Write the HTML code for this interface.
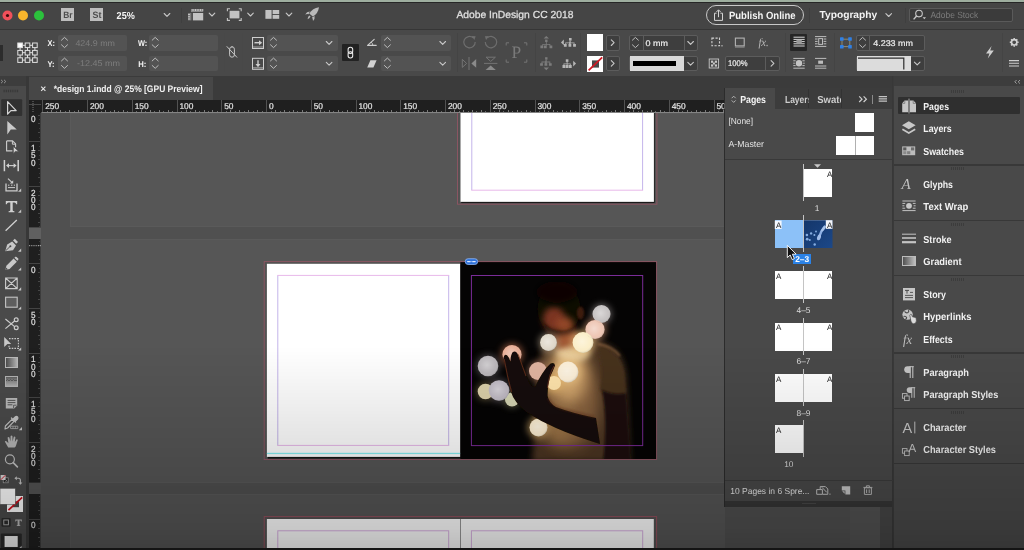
<!DOCTYPE html>
<html lang="en">
<head>
<meta charset="utf-8">
<title>Adobe InDesign CC 2018</title>
<style>
*{box-sizing:border-box;margin:0;padding:0}
html,body{width:1024px;height:550px;overflow:hidden;background:#3a3a3a}
body{font-family:"Liberation Sans",sans-serif;color:#e6e6e6;font-size:10px;position:relative}
.a{position:absolute}
.t{position:absolute;white-space:nowrap;line-height:1}
.b{font-weight:bold}
#app{position:absolute;left:0;top:0;width:1024px;height:550px;overflow:hidden;background:#3a3a3a}
/* top */
#topstrip{left:0;top:0;width:1024px;height:1.5px;background:#9eae9f}
#topline{left:0;top:1.5px;width:1024px;height:1.5px;background:#262626}
#titlebar{left:0;top:3px;width:1024px;height:26px;background:#454545}
#titlesep{left:0;top:28.6px;width:1024px;height:1.6px;background:#363636}
#ctrlbar{left:0;top:30px;width:1024px;height:45.6px;background:#494949}
#tabbar{left:0;top:75.6px;width:1024px;height:25px;background:#3b3b3b}
.fld{position:absolute;background:#535353;border-radius:2px}
.fldb{position:absolute;background:#3e3e3e;border:1px solid #5c5c5c;border-radius:2px}
/* canvas */
#doctabbg{left:29px;top:77px;width:184px;height:23.4px;background:#474747}
#toolsedge{left:26.2px;top:76px;width:2.8px;height:474px;background:#383838}
#canvas{left:41px;top:113px;width:852px;height:437px;background:#505050;overflow:hidden}
.pb{box-shadow:inset 0 0 0 1px #5a5a5a}
.pb{position:absolute;background:#565656}
/* rulers */
#hruler{left:29px;top:100px;width:864px;height:13px;background:#1f1f1f}
#vruler{left:29px;top:113px;width:12px;height:437px;background:#1f1f1f}
.rl{position:absolute;font-size:8.3px;color:#e6e6e6;line-height:1;text-shadow:0 0 .4px #e6e6e6}
.vl{position:absolute;font-size:8.3px;color:#e6e6e6;line-height:1;left:30.8px;text-shadow:0 0 .4px #e6e6e6}
/* toolbar */
#tools{left:0;top:77px;width:28px;height:473px;background:#4a4a4a}
#toolshead{left:0;top:76px;width:28px;height:9.5px;background:#3d3d3d}
/* pages panel */
#pp{left:725px;top:88px;width:167px;height:413px;background:#494949}
#pptabs{left:725px;top:88px;width:167px;height:20.6px;background:#3c3c3c}
#pptab{left:725px;top:88px;width:50.4px;height:20.6px;background:#494949}
.pg{position:absolute;background:#fff}
.pl{position:absolute;font-size:8.3px;color:#dcdcdc;line-height:1;text-align:center}
.pa{position:absolute;font-size:7.5px;color:#222;line-height:1}
/* dock */
#dock{left:893.5px;top:85.8px;width:131px;height:465px;background:#494949}
#docktop{left:893.5px;top:76px;width:131px;height:10px;background:#3d3d3d}
.di{position:absolute;left:923px;font-size:10px;font-weight:bold;color:#f2f2f2;line-height:1;white-space:nowrap;letter-spacing:.1px}
.ds{position:absolute;left:893.5px;width:131px;height:1.2px;background:#383838}
.dg{position:absolute;left:951px;width:14px;height:3px;background:repeating-linear-gradient(90deg,#3c3c3c 0 1px,transparent 1px 2px)}
#txt{will-change:transform}
#vig{left:0;top:0;width:1024px;height:550px;background:linear-gradient(to bottom,rgba(0,0,0,0) 63%,rgba(0,0,0,.105) 80%,rgba(0,0,0,.215) 96%,rgba(0,0,0,.27) 100%);pointer-events:none}
#botline{left:0;top:548px;width:1024px;height:2px;background:#141414}
</style>
</head>
<body>
<div id="app">
<div class="a" id="titlebar"></div>
<div class="a" id="titlesep"></div>
<div class="a" id="ctrlbar"></div>
<div class="a" id="tabbar"></div>
<div class="a" id="topstrip"></div>
<div class="a" id="topline"></div>
<div class="a" id="canvas">
<div class="pb" style="left:29px;top:0;width:684px;height:114.4px"></div>
<div class="pb" style="left:29px;top:126px;width:684px;height:243.6px"></div>
<div class="pb" style="left:29px;top:381px;width:684px;height:60px"></div>
<div class="a" style="left:684px;top:381px;width:125px;height:60px;background:#4f4f4f"></div>
<div class="a" style="left:809px;top:381px;width:30px;height:60px;background:#525252"></div>
<div class="a" style="left:839px;top:381px;width:13px;height:60px;background:#464646"></div>
<svg class="a" style="left:0;top:0" width="852" height="437" viewBox="41 113 852 437">
<defs>
<filter id="bl1" x="-50%" y="-50%" width="200%" height="200%"><feGaussianBlur stdDeviation="1.2"/></filter>
<filter id="bl2" x="-50%" y="-50%" width="200%" height="200%"><feGaussianBlur stdDeviation="3"/></filter>
<filter id="bl3" x="-50%" y="-50%" width="200%" height="200%"><feGaussianBlur stdDeviation="7"/></filter>
<filter id="bl0" x="-50%" y="-50%" width="200%" height="200%"><feGaussianBlur stdDeviation="0.6"/></filter>
<clipPath id="phc"><rect x="460.4" y="262" width="195.8" height="197.2"/></clipPath>
</defs>
<!-- spread 1 -->
<rect x="458" y="90" width="198.6" height="114" fill="#525252"/>
<rect x="461.2" y="90" width="193.5" height="113.1" fill="#1a1a1a"/>
<rect x="460.5" y="90" width="193.4" height="111.85" fill="#fff"/>
<rect x="457.5" y="90" width="199.4" height="114.2" fill="none" stroke="#8a5562" stroke-width="1"/>
<path d="M471.8 113V190.2" fill="none" stroke="#c4b4ea" stroke-width="1"/><path d="M642.6 113V190.2" fill="none" stroke="#c4b4ea" stroke-width="1"/>
<path d="M471.3 190.2H643.1" fill="none" stroke="#e8b8ea" stroke-width="1"/>
<!-- spread 2 -->
<rect x="264.2" y="261.6" width="392.4" height="197.9" fill="#525252"/>
<rect x="267.8" y="264.6" width="387" height="194" fill="#141414"/>
<rect x="266.9" y="263.8" width="193.5" height="193.1" fill="#fff"/>
<path d="M277.8 275.4V445.4M448.7 275.4V445.4" fill="none" stroke="#c4b4ea" stroke-width="1"/>
<path d="M277.3 275.4H449.2M277.3 445.4H449.2" fill="none" stroke="#e8b8ea" stroke-width="1"/>
<rect x="266.9" y="452.8" width="193.5" height="1.3" fill="#88eef2"/>
<g clip-path="url(#phc)">
<rect x="460" y="261" width="197" height="199" fill="#050404"/>
<!-- shirt -->
<path d="M547 338L577 333Q602 340 613 348Q624 356 626 378L630 462L532 462L537 400Q536 360 547 338Z" fill="#4c3624" filter="url(#bl2)"/>
<ellipse cx="570" cy="402" rx="29" ry="46" fill="#86603c" filter="url(#bl3)"/>
<ellipse cx="568" cy="374" rx="19" ry="30" fill="#d0a46c" filter="url(#bl3)"/>
<ellipse cx="573" cy="352" rx="17" ry="10" fill="#ecd2a0" filter="url(#bl2)" opacity=".9"/>
<ellipse cx="558" cy="425" rx="14" ry="20" fill="#a07848" filter="url(#bl3)" opacity=".8"/>
<!-- sleeve + arm -->
<path d="M597 345Q619 350 624 372L626 394Q612 398 600 390Q605 366 597 345Z" fill="#46301f" filter="url(#bl1)"/>
<path d="M598 344Q612 346 620 356" stroke="#8a6240" stroke-width="2" fill="none" filter="url(#bl1)" opacity=".8"/>
<path d="M602 390Q614 396 626 393L631 462L603 462Q608 420 602 390Z" fill="#1c110b" filter="url(#bl1)"/>
<!-- head -->
<ellipse cx="559" cy="309" rx="21.5" ry="26" fill="#100806" filter="url(#bl1)"/>
<ellipse cx="580.5" cy="313" rx="3.6" ry="6.5" fill="#3c1c10" filter="url(#bl1)"/>
<ellipse cx="554" cy="319" rx="11" ry="12" fill="#7c3620" filter="url(#bl2)"/>
<ellipse cx="565" cy="325" rx="9" ry="8" fill="#9c4c2c" filter="url(#bl2)" opacity=".9"/>
<path d="M543 322Q546 338 558 341Q571 339 577 325Q569 333 557 331Q548 329 543 322Z" fill="#2a120a" filter="url(#bl1)" opacity=".9"/>
<path d="M553 336L577 331L581 345L557 349Z" fill="#a05632" filter="url(#bl2)"/>
<ellipse cx="557" cy="292" rx="21" ry="11" fill="#070404" filter="url(#bl2)"/>
<!-- glows -->
<g filter="url(#bl2)" opacity=".6">
<circle cx="601.5" cy="314" r="10.5" fill="#8a8484"/>
<circle cx="595" cy="329.5" r="11.5" fill="#c08868"/>
<circle cx="583" cy="342.5" r="12.5" fill="#e0b878"/>
<circle cx="548.5" cy="342.5" r="10" fill="#b0a088"/>
<circle cx="568" cy="372" r="13" fill="#f0c888"/>
<circle cx="538" cy="371" r="10.5" fill="#b07860"/>
<circle cx="512" cy="354.5" r="11.5" fill="#b06848"/>
<circle cx="488" cy="366" r="12" fill="#605c60"/>
<circle cx="499" cy="390.5" r="12" fill="#686068"/>
<circle cx="485.5" cy="391.5" r="9.5" fill="#7a6c48"/>
<circle cx="512" cy="399.5" r="8.5" fill="#7a7a58"/>
<circle cx="538.5" cy="427.5" r="11.5" fill="#d0a868"/>
<circle cx="553.5" cy="383" r="10" fill="#f0c070"/>
</g>
<!-- balls -->
<defs>
<radialGradient id="bg1" cx=".45" cy=".45" r=".6"><stop offset="0" stop-color="#fff" stop-opacity=".35"/><stop offset=".7" stop-color="#fff" stop-opacity="0"/><stop offset="1" stop-color="#000" stop-opacity=".22"/></radialGradient>
</defs>
<g filter="url(#bl0)">
<circle cx="485.5" cy="391.5" r="7.8" fill="#dcd0aa"/>
<circle cx="512" cy="399.5" r="7" fill="#d4d4b2"/>
<circle cx="601.5" cy="314" r="9" fill="#c6c2c2"/>
<circle cx="595" cy="329.5" r="9.6" fill="#eec6b4"/>
<circle cx="583" cy="342.5" r="10.4" fill="#fbeec8"/>
<circle cx="548.5" cy="342.5" r="8.4" fill="#e0d8ca"/>
<circle cx="568" cy="372" r="10.4" fill="#fdf0d8"/>
<circle cx="538" cy="371" r="9" fill="#e0b4a0"/>
<circle cx="512" cy="354.5" r="9.6" fill="#e8ae96"/>
<circle cx="488" cy="366" r="10.3" fill="#bcb8bc"/>
<circle cx="499" cy="390.5" r="10.3" fill="#c0bac4"/>
<circle cx="538.5" cy="427.5" r="9" fill="#fbecce"/>
<circle cx="554" cy="383" r="7" fill="#ffe4ac"/>
</g>
<g fill="url(#bg1)">
<circle cx="601.5" cy="314" r="9"/><circle cx="595" cy="329.5" r="9.6"/><circle cx="583" cy="342.5" r="10.4"/><circle cx="548.5" cy="342.5" r="8.4"/><circle cx="568" cy="372" r="10.4"/><circle cx="512" cy="354.5" r="9.6"/><circle cx="488" cy="366" r="10.3"/><circle cx="499" cy="390.5" r="10.3"/><circle cx="538.5" cy="427.5" r="9"/>
</g>
<!-- hand -->
<g filter="url(#bl0)">
<path d="M503.4 358Q504.4 353.6 507 355.2Q509 357 510.4 361.4Q510.6 355 512.6 352.2Q515.4 350.2 517.4 353.4Q521 362 524.6 372L530.6 384.4Q533.4 388 535.6 386Q538 380 542 374Q546.4 367 550.6 363.6Q554.4 362 555 365.6Q553 371 550 377Q547.4 386 547.6 396Q549 403 556 407Q572 413 596 418L600 444Q574 436 556 428Q540 421 526 412Q514 402 511 392Q507 374 503.4 358Z" fill="#150b07"/>
</g>
<path d="M504.2 359Q507 376 511.6 392M518.2 354.4Q521.6 364 526 376M554 366Q549 374 547.4 388" stroke="#6e3420" stroke-width="1.1" fill="none" filter="url(#bl0)" opacity=".75"/>
<path d="M548 398Q551 405 562 409L594 417" stroke="#5a2c18" stroke-width="1.4" fill="none" filter="url(#bl1)" opacity=".7"/>
<!-- purple margin -->
<rect x="471.4" y="275.5" width="171.3" height="170.1" fill="none" stroke="#7a2c98" stroke-width="1"/>
</g>

<rect x="264.2" y="261.6" width="392.4" height="197.9" fill="none" stroke="#8a5562" stroke-width="1"/>
<!-- spread 3 -->
<rect x="264.2" y="516.6" width="392.4" height="40" fill="#525252"/>
<rect x="266.9" y="519" width="386.9" height="40" fill="#fff"/>
<rect x="460" y="519" width=".9" height="40" fill="#8c8c8c"/>
<rect x="277.8" y="530.8" width="170.9" height="40" fill="none" stroke="#dab2e4" stroke-width="1"/>
<rect x="471.4" y="530.8" width="171.3" height="40" fill="none" stroke="#dab2e4" stroke-width="1"/>
<rect x="264.2" y="516.6" width="392.4" height="40" fill="none" stroke="#96505e" stroke-width="1"/>
<!-- link badge -->
<rect x="465.2" y="258.7" width="12.5" height="5.8" rx="2.9" fill="#2f72da" stroke="#8db2f0" stroke-width=".8"/>
<path d="M467.6 261.6h2.6M472.6 261.6h2.6" stroke="#dbe8ff" stroke-width="1.2" stroke-linecap="round"/><path d="M469.8 261.6h3" stroke="#9cc0f8" stroke-width=".8"/>
</svg>

</div>
<div class="a" id="hruler"></div>
<div class="a" id="vruler"></div>
<svg class="a" style="left:0;top:0" width="1024" height="550" viewBox="0 0 1024 550">
<g stroke-width="1" shape-rendering="crispEdges" fill="none">
<path d="M42.9 100.4V113M87.6 100.4V113M132.4 100.4V113M177.1 100.4V113M221.9 100.4V113M266.6 100.4V113M311.4 100.4V113M356.1 100.4V113M400.9 100.4V113M445.6 100.4V113M490.4 100.4V113M535.1 100.4V113M579.9 100.4V113M624.6 100.4V113M669.4 100.4V113M714.1 100.4V113M758.9 100.4V113M803.6 100.4V113M848.4 100.4V113" stroke="#525252"/>
<path d="M51.8 109.6V112M60.8 109.6V112M69.7 109.6V112M78.7 109.6V112M96.6 109.6V112M105.5 109.6V112M114.5 109.6V112M123.4 109.6V112M141.3 109.6V112M150.3 109.6V112M159.2 109.6V112M168.2 109.6V112M186.1 109.6V112M195.0 109.6V112M204.0 109.6V112M212.9 109.6V112M230.8 109.6V112M239.8 109.6V112M248.7 109.6V112M257.7 109.6V112M275.6 109.6V112M284.5 109.6V112M293.5 109.6V112M302.4 109.6V112M320.3 109.6V112M329.2 109.6V112M338.2 109.6V112M347.2 109.6V112M365.1 109.6V112M374.0 109.6V112M383.0 109.6V112M391.9 109.6V112M409.8 109.6V112M418.8 109.6V112M427.7 109.6V112M436.7 109.6V112M454.6 109.6V112M463.5 109.6V112M472.5 109.6V112M481.4 109.6V112M499.3 109.6V112M508.2 109.6V112M517.2 109.6V112M526.2 109.6V112M544.0 109.6V112M553.0 109.6V112M562.0 109.6V112M570.9 109.6V112M588.8 109.6V112M597.8 109.6V112M606.7 109.6V112M615.7 109.6V112M633.5 109.6V112M642.5 109.6V112M651.5 109.6V112M660.4 109.6V112M678.3 109.6V112M687.2 109.6V112M696.2 109.6V112M705.2 109.6V112M723.0 109.6V112M732.0 109.6V112M741.0 109.6V112M749.9 109.6V112M767.8 109.6V112M776.8 109.6V112M785.7 109.6V112M794.6 109.6V112M812.6 109.6V112M821.5 109.6V112M830.5 109.6V112M839.4 109.6V112M857.3 109.6V112M866.2 109.6V112M875.2 109.6V112M884.1 109.6V112" stroke="#7c7c7c"/>
<path d="M47.3 110.8V112M56.3 110.8V112M65.2 110.8V112M74.2 110.8V112M83.1 110.8V112M92.1 110.8V112M101.0 110.8V112M110.0 110.8V112M118.9 110.8V112M127.9 110.8V112M136.8 110.8V112M145.8 110.8V112M154.7 110.8V112M163.7 110.8V112M172.6 110.8V112M181.6 110.8V112M190.5 110.8V112M199.5 110.8V112M208.4 110.8V112M217.4 110.8V112M226.3 110.8V112M235.3 110.8V112M244.2 110.8V112M253.2 110.8V112M262.1 110.8V112M271.1 110.8V112M280.0 110.8V112M289.0 110.8V112M297.9 110.8V112M306.9 110.8V112M315.8 110.8V112M324.8 110.8V112M333.7 110.8V112M342.7 110.8V112M351.6 110.8V112M360.6 110.8V112M369.5 110.8V112M378.5 110.8V112M387.4 110.8V112M396.4 110.8V112M405.3 110.8V112M414.3 110.8V112M423.2 110.8V112M432.2 110.8V112M441.1 110.8V112M450.1 110.8V112M459.0 110.8V112M468.0 110.8V112M476.9 110.8V112M485.9 110.8V112M494.8 110.8V112M503.8 110.8V112M512.7 110.8V112M521.7 110.8V112M530.6 110.8V112M539.6 110.8V112M548.5 110.8V112M557.5 110.8V112M566.4 110.8V112M575.4 110.8V112M584.3 110.8V112M593.3 110.8V112M602.2 110.8V112M611.2 110.8V112M620.1 110.8V112M629.1 110.8V112M638.0 110.8V112M647.0 110.8V112M655.9 110.8V112M664.9 110.8V112M673.8 110.8V112M682.8 110.8V112M691.7 110.8V112M700.7 110.8V112M709.6 110.8V112M718.6 110.8V112M727.5 110.8V112M736.5 110.8V112M745.4 110.8V112M754.4 110.8V112M763.3 110.8V112M772.3 110.8V112M781.2 110.8V112M790.2 110.8V112M799.1 110.8V112M808.1 110.8V112M817.0 110.8V112M826.0 110.8V112M834.9 110.8V112M843.9 110.8V112M852.8 110.8V112M861.8 110.8V112M870.7 110.8V112M879.7 110.8V112M888.6 110.8V112" stroke="#6a6a6a"/>
<path d="M41 112.5H893" stroke="#848484"/>
<path d="M29 141.8H41M29 186.6H41M29 263.6H41M29 308.4H41M29 353.1H41M29 397.9H41M29 442.6H41M29 519.2H41" stroke="#444"/>
<path d="M37.6 115.0H40M37.6 123.9H40M37.6 132.9H40M37.6 150.8H40M37.6 159.8H40M37.6 168.7H40M37.6 177.7H40M37.6 195.5H40M37.6 204.5H40M37.6 213.4H40M37.6 222.4H40M37.6 245.7H40M37.6 254.7H40M37.6 272.6H40M37.6 281.5H40M37.6 290.5H40M37.6 299.4H40M37.6 317.3H40M37.6 326.2H40M37.6 335.2H40M37.6 344.2H40M37.6 362.1H40M37.6 371.0H40M37.6 380.0H40M37.6 388.9H40M37.6 406.8H40M37.6 415.8H40M37.6 424.7H40M37.6 433.7H40M37.6 451.6H40M37.6 460.5H40M37.6 469.5H40M37.6 478.4H40M37.6 501.3H40M37.6 510.3H40M37.6 528.2H40M37.6 537.1H40M37.6 546.1H40" stroke="#474747"/>
<path d="M38.8 119.5H40M38.8 128.4H40M38.8 137.4H40M38.8 146.3H40M38.8 155.3H40M38.8 164.2H40M38.8 173.2H40M38.8 182.1H40M38.8 191.1H40M38.8 200.0H40M38.8 209.0H40M38.8 217.9H40M38.8 226.9H40M38.8 241.2H40M38.8 250.2H40M38.8 259.1H40M38.8 268.1H40M38.8 277.0H40M38.8 286.0H40M38.8 294.9H40M38.8 303.9H40M38.8 312.8H40M38.8 321.8H40M38.8 330.7H40M38.8 339.7H40M38.8 348.6H40M38.8 357.6H40M38.8 366.5H40M38.8 375.5H40M38.8 384.4H40M38.8 393.4H40M38.8 402.3H40M38.8 411.3H40M38.8 420.2H40M38.8 429.2H40M38.8 438.1H40M38.8 447.1H40M38.8 456.0H40M38.8 465.0H40M38.8 473.9H40M38.8 496.8H40M38.8 505.8H40M38.8 514.7H40M38.8 523.7H40M38.8 532.6H40M38.8 541.6H40" stroke="#3a3a3a"/>
<path d="M40.5 113V227.4M40.5 239V482.6M40.5 494V550" stroke="#3c3c3c"/>
</g>
<rect x="29" y="227.4" width="12" height="11.6" fill="#606060"/>
<rect x="29" y="482.6" width="12" height="11.4" fill="#545454"/>
<rect x="29" y="100.4" width="12.4" height="12.6" fill="#1e1e1e"/>
<path d="M33 101V113M29.5 104.5H41.4" stroke="#8a8a8a" stroke-width=".8" stroke-dasharray="1 1" fill="none"/>
<path d="M29 245.7H41" stroke="#d0d0d0" stroke-width=".8" stroke-dasharray="1.2 1" fill="none"/>
</svg>

<div class="a" id="tools"></div>
<div class="a" id="toolshead"></div>
<div class="a" id="toolsedge"></div>
<div class="a" style="left:60.8px;top:8.3px;width:13.4px;height:13.2px;background:#bdbdbd"></div>
<div class="a" style="left:90px;top:8.3px;width:13.2px;height:13.2px;background:#bdbdbd"></div>
<div class="a" style="left:180.5px;top:8px;width:1px;height:15px;background:#3f3f3f"></div>
<div class="a" style="left:705.5px;top:4.8px;width:98.4px;height:20.6px;border:1.1px solid #c8c8c8;border-radius:10.5px"></div>
<div class="a" style="left:904.5px;top:8px;width:1px;height:15px;background:#3f3f3f"></div>
<div class="a" style="left:808.6px;top:8px;width:1px;height:15px;background:#3f3f3f"></div>
<div class="a" style="left:909.3px;top:7.6px;width:103.8px;height:14.6px;background:#3b3b3b;border:1px solid #5a5a5a;border-radius:2px"></div>

<div class="a" style="left:0;top:45px;width:2.5px;height:16px;background:#2c2c2c"></div>
<div class="fld" style="left:58px;top:35px;width:69px;height:15.5px"></div>
<div class="fld" style="left:58px;top:55.5px;width:69px;height:15.5px"></div>
<div class="fld" style="left:149px;top:35px;width:68.5px;height:15.5px"></div>
<div class="fld" style="left:149px;top:55.5px;width:68.5px;height:15.5px"></div>
<div class="a" style="left:223.5px;top:33px;width:1px;height:39px;background:#484848"></div>
<div class="a" style="left:241.5px;top:33px;width:1px;height:39px;background:#484848"></div>
<div class="fld" style="left:267px;top:35px;width:70.5px;height:15.5px"></div>
<div class="fld" style="left:267px;top:55.5px;width:70.5px;height:15.5px"></div>
<div class="a" style="left:342px;top:43.8px;width:17px;height:17.2px;background:#222;border-radius:1px"></div>
<div class="fld" style="left:381px;top:35px;width:69.5px;height:15.5px"></div>
<div class="fld" style="left:381px;top:55.5px;width:69.5px;height:15.5px"></div>
<div class="a" style="left:456.5px;top:33px;width:1px;height:39px;background:#444444"></div>
<div class="a" style="left:535px;top:33px;width:1px;height:39px;background:#444444"></div>
<div class="a" style="left:580px;top:33px;width:1px;height:39px;background:#444444"></div>
<div class="a" style="left:587.3px;top:34.4px;width:16.2px;height:16.2px;background:#fff"></div>
<div class="a" style="left:587.3px;top:55.8px;width:16.2px;height:16px;background:#fff"></div>
<div class="fldb" style="left:606px;top:35px;width:13.5px;height:15.5px"></div>
<div class="fldb" style="left:606px;top:55.5px;width:13.5px;height:15.5px"></div>
<div class="fldb" style="left:629px;top:35px;width:69px;height:15.5px"></div>
<div class="a" style="left:643px;top:36px;width:1px;height:13.5px;background:#5c5c5c"></div>
<div class="a" style="left:684px;top:36px;width:1px;height:13.5px;background:#5c5c5c"></div>
<div class="fldb" style="left:629px;top:55.5px;width:69px;height:15.5px"></div>
<div class="a" style="left:629.5px;top:56px;width:54px;height:14.5px;background:#d9d9d9"></div>
<div class="a" style="left:633px;top:60.5px;width:43px;height:5.5px;background:#000"></div>
<div class="fldb" style="left:724.5px;top:55.5px;width:55px;height:15.5px"></div>
<div class="a" style="left:765px;top:56.5px;width:1px;height:13.5px;background:#5c5c5c"></div>
<div class="a" style="left:784.5px;top:33px;width:1px;height:39px;background:#444444"></div>
<div class="a" style="left:790px;top:33.5px;width:17px;height:17px;background:#262626;border-radius:1px"></div>
<div class="a" style="left:833.5px;top:33px;width:1px;height:39px;background:#444444"></div>
<div class="fldb" style="left:856px;top:35px;width:69px;height:15.5px"></div>
<div class="a" style="left:869px;top:36px;width:1px;height:13.5px;background:#5c5c5c"></div>
<div class="fldb" style="left:856px;top:55.5px;width:69px;height:15.5px"></div>
<div class="a" style="left:856.5px;top:56px;width:54px;height:14.5px;background:#dcdcdc"></div>
<div class="a" style="left:1001.5px;top:33px;width:1px;height:39px;background:#444444"></div>

<div class="a" id="doctabbg"></div>
<div class="a" id="pp"></div>
<div class="a" id="pptabs"></div>
<div class="a" id="pptab"></div>
<div class="a" style="left:807.5px;top:89px;width:1px;height:19px;background:#333"></div>
<div class="a" style="left:841px;top:89px;width:1px;height:19px;background:#333"></div>
<div class="a" style="left:725px;top:500.6px;width:167.5px;height:6px;background:#363636"></div>
<div class="a" style="left:802px;top:502.8px;width:14px;height:1.6px;background:#484848"></div>
<div class="a" style="left:724.2px;top:88px;width:1px;height:419px;background:#2c2c2c"></div>
<div class="a" style="left:891.8px;top:76px;width:1.7px;height:474px;background:#383838"></div>
<div class="a" style="left:872.3px;top:94.5px;width:1px;height:9px;background:#8a8a8a"></div>
<div class="pg" style="left:855px;top:113px;width:19.4px;height:18.6px"></div>
<div class="pg" style="left:835.7px;top:135.9px;width:38.7px;height:18.8px"></div>
<div class="a" style="left:855px;top:135.9px;width:.8px;height:18.8px;background:#b0b0b0"></div>
<div class="a" style="left:725px;top:158.6px;width:167.5px;height:1px;background:#393939"></div>
<div class="a" style="left:802.8px;top:163.6px;width:1px;height:37.0px;background:#c4c4c4"></div>
<div class="pg" style="left:803.8px;top:168.6px;width:28.6px;height:28.2px"></div>
<div class="a" style="left:802.8px;top:215.2px;width:1px;height:37.0px;background:#c4c4c4"></div>
<div class="pg" style="left:774.8px;top:220.2px;width:28.2px;height:28.2px"></div>
<div class="pg" style="left:803.8px;top:220.2px;width:28.6px;height:28.2px"></div>
<div class="a" style="left:802.8px;top:266.3px;width:1px;height:37.0px;background:#c4c4c4"></div>
<div class="pg" style="left:774.8px;top:271.3px;width:28.2px;height:28.2px"></div>
<div class="pg" style="left:803.8px;top:271.3px;width:28.6px;height:28.2px"></div>
<div class="a" style="left:802.8px;top:317.7px;width:1px;height:37.0px;background:#c4c4c4"></div>
<div class="pg" style="left:774.8px;top:322.7px;width:28.2px;height:28.2px"></div>
<div class="pg" style="left:803.8px;top:322.7px;width:28.6px;height:28.2px"></div>
<div class="a" style="left:802.8px;top:369.0px;width:1px;height:37.0px;background:#c4c4c4"></div>
<div class="pg" style="left:774.8px;top:374px;width:28.2px;height:28.2px"></div>
<div class="pg" style="left:803.8px;top:374px;width:28.6px;height:28.2px"></div>
<div class="a" style="left:802.8px;top:420.0px;width:1px;height:37.0px;background:#c4c4c4"></div>
<div class="pg" style="left:774.8px;top:425px;width:28.2px;height:28.2px"></div>
<div class="a" style="left:774.8px;top:220.2px;width:28.2px;height:27.8px;background:#8cc1f8"></div>
<div class="a" style="left:792.7px;top:253.5px;width:18.8px;height:10.4px;background:#2b82e6"></div>
<div class="a" style="left:725px;top:479.6px;width:167.5px;height:1px;background:#3c3c3c"></div>
<div class="a" id="docktop"></div>
<div class="a" id="dock"></div>
<div class="a" style="left:897.6px;top:97.3px;width:122.6px;height:16.8px;background:#2f2f2f;border-radius:1px"></div>
<div class="ds" style="top:164.4px"></div>
<div class="ds" style="top:219.6px"></div>
<div class="ds" style="top:275.2px"></div>
<div class="ds" style="top:352.4px"></div>
<div class="ds" style="top:407.5px"></div>
<div class="ds" style="top:462.7px"></div>
<div class="dg" style="top:89.8px"></div>
<div class="dg" style="top:167.4px"></div>
<div class="dg" style="top:222.8px"></div>
<div class="dg" style="top:278.2px"></div>
<div class="dg" style="top:355.4px"></div>
<div class="dg" style="top:410.6px"></div>
<svg class="a" style="left:0;top:0" width="1024" height="550" viewBox="0 0 1024 550" id="icons">
<defs>
<g id="chv"><path d="M-2.8 -1.5L0 1.3L2.8 -1.5" fill="none" stroke="#c8c8c8" stroke-width="1.1" stroke-linecap="round" stroke-linejoin="round"/></g>
<g id="chr"><path d="M-1.4 -2.8L1.4 0L-1.4 2.8" fill="none" stroke="#c8c8c8" stroke-width="1.1" stroke-linecap="round" stroke-linejoin="round"/></g>
<g id="ud"><path d="M-3 -2.4L0 -5.2L3 -2.4M-3 2.2L0 5L3 2.2" fill="none" stroke="#c2c2c2" stroke-width=".95" stroke-linecap="round" stroke-linejoin="round"/></g>
</defs>
<!-- traffic lights -->
<circle cx="7.5" cy="15.5" r="5" fill="#f0505a"/><circle cx="7.5" cy="15.5" r="1.6" fill="#3a0a0c"/>
<circle cx="23" cy="15.5" r="5" fill="#f8b52c"/>
<circle cx="39" cy="15.5" r="5" fill="#2bc13c"/>
<use href="#chv" x="167" y="15"/>
<use href="#chv" x="212" y="14.7"/>
<use href="#chv" x="250.5" y="14.7"/>
<use href="#chv" x="289" y="14.7"/>
<use href="#chv" x="888.7" y="15.2"/>
<!-- view options -->
<g fill="#c2c2c2">
<rect x="192.9" y="13" width="10.3" height="7.4"/>
<path d="M191 9h12.2v3h-12.2z" opacity=".55"/>
<path d="M192.5 9h1v2h-1zM195 9h1v2h-1zM197.5 9h1v2h-1zM200 9h1v2h-1zM202.3 9h.9v2h-.9z"/>
<path d="M188 13h3.4v7.4h-3.4z" opacity=".45"/>
<path d="M188 14h2v1h-2zM188 16.3h2v1h-2zM188 18.6h2v1h-2z"/>
</g>
<!-- screen mode -->
<rect x="229.6" y="10.8" width="9.8" height="7.6" fill="#c2c2c2"/>
<path d="M227.4 11.2V8.8H230M238.8 8.8H241.2V11.2M241.2 18V20.4H238.8M230 20.4H227.4V18" fill="none" stroke="#c2c2c2" stroke-width="1.1"/>
<!-- arrange -->
<g fill="#c2c2c2"><rect x="265.4" y="10" width="6.2" height="8.8"/><rect x="272.6" y="10" width="6.6" height="4"/><rect x="272.6" y="14.9" width="6.6" height="3.9"/></g>
<!-- rocket -->
<g fill="#b8b8b8">
<path d="M319 7.3Q312.5 8.2 309.2 13.6L312.8 16.6Q318.2 13.6 319 7.3Z"/>
<path d="M309.8 11.6Q306.6 11.8 305.2 14.4Q307.4 13.8 308.6 14.2Z"/>
<path d="M314.6 16Q315.2 18.8 313 21Q312.8 18.6 312 17.6Z"/>
<path d="M309.4 15.4Q307.6 16.6 307.6 19.2Q309.4 18.8 310.6 16.6Z"/>
</g>
<!-- publish icon -->
<g fill="none" stroke="#d4d4d4" stroke-width="1">
<path d="M716.6 13.2H714.5V20.4H722.5V13.2H720.4"/>
<path d="M718.5 17.2V10.2M716.4 12L718.5 9.8L720.6 12"/>
</g>
<!-- search icon -->
<g fill="none" stroke="#c8c8c8" stroke-width="1.1"><circle cx="919" cy="13.6" r="3.3"/><path d="M916.6 16L913.6 19.4" stroke-width="1.4"/></g>
<path d="M922.6 17.2h3.4l-1.7 2z" fill="#c8c8c8"/>
<!-- ref point -->
<g fill="none" stroke="#e0e0e0" stroke-width="1">
<rect x="17.8" y="43" width="4.6" height="4.6" fill="#fff"/><rect x="25.2" y="43" width="4.6" height="4.6"/><rect x="32.6" y="43" width="4.6" height="4.6"/>
<rect x="17.8" y="50.4" width="4.6" height="4.6"/><rect x="25.2" y="50.4" width="4.6" height="4.6"/><rect x="32.6" y="50.4" width="4.6" height="4.6"/>
<rect x="17.8" y="57.8" width="4.6" height="4.6"/><rect x="25.2" y="57.8" width="4.6" height="4.6"/><rect x="32.6" y="57.8" width="4.6" height="4.6"/>
<path d="M22.4 45.3h2.8M29.8 45.3h2.8M22.4 52.7h2.8M29.8 52.7h2.8M22.4 60.1h2.8M29.8 60.1h2.8M20.1 47.6v2.8M27.5 47.6v2.8M34.9 47.6v2.8M20.1 55v2.8M27.5 55v2.8M34.9 55v2.8"/>
</g>
<use href="#ud" x="64.5" y="42.6"/><use href="#ud" x="64.5" y="63.3"/>
<use href="#ud" x="155.2" y="42.6"/><use href="#ud" x="155.2" y="63.3"/>
<use href="#ud" x="273.5" y="42.6"/><use href="#ud" x="273.5" y="63.3"/>
<use href="#ud" x="387.4" y="42.6"/><use href="#ud" x="387.4" y="63.3"/>
<use href="#ud" x="635.4" y="42.6"/>
<use href="#ud" x="862.6" y="42.6"/>
<use href="#chv" x="329.1" y="43"/><use href="#chv" x="329.1" y="63.8"/>
<use href="#chv" x="442.7" y="43"/><use href="#chv" x="442.7" y="63.8"/>
<use href="#chv" x="690.6" y="43"/><use href="#chv" x="690.6" y="63.8"/>
<use href="#chv" x="917.2" y="63.6"/>
<use href="#chr" x="612.7" y="42.7"/><use href="#chr" x="612.7" y="63.4"/>
<use href="#chr" x="772.5" y="63.4"/>
<!-- broken link -->
<g fill="none" stroke="#c6c6c6" stroke-width="1" stroke-linecap="round">
<rect x="229.6" y="46.8" width="4.8" height="10.4" rx="2.4"/>
<path d="M227 46.6L236.8 57.2"/>
</g>
<!-- arrow boxes -->
<g fill="none" stroke="#cfcfcf" stroke-width="1">
<rect x="252.5" y="37.5" width="11" height="11"/><path d="M252.5 47H263.5" opacity=".7"/>
<rect x="252.5" y="58.3" width="11" height="11"/><path d="M252.5 67.8H263.5" opacity=".7"/>
<path d="M254.5 42.7H260" stroke-width="1.4"/><path d="M258 60.3V65" stroke-width="1.4"/>
</g>
<path d="M259 40.2L262.2 42.7L259 45.2Z" fill="#cfcfcf"/><path d="M255.5 64L258 67.2L260.5 64Z" fill="#cfcfcf"/>
<!-- chain in box -->
<g fill="none" stroke="#ededed" stroke-width="1.05">
<rect x="348.1" y="47.2" width="4.6" height="6.2" rx="2.2"/><rect x="348.1" y="51.8" width="4.6" height="6.2" rx="2.2"/>
</g>
<!-- angle / shear -->
<path d="M376.2 45.4H367.6L374.2 39.4" fill="none" stroke="#cfcfcf" stroke-width="1.1" stroke-linejoin="round" stroke-linecap="round"/>
<path d="M371 42.2Q373 43.2 372.8 45.4" fill="none" stroke="#cfcfcf" stroke-width=".9"/>
<path d="M367.2 67.4L370.4 60.2H376.6L373.4 67.4Z" fill="#d2d2d2"/>
<!-- rotate -->
<g fill="none" stroke="#6e6e6e" stroke-width="1.2">
<path d="M473.2 37.8A5.7 5.7 0 1 0 475.2 42"/><path d="M487.3 37.8A5.7 5.7 0 1 1 485.3 42"/>
</g>
<path d="M471.6 36L475.6 36.2L474.4 40Z" fill="#6e6e6e"/><path d="M488.9 36L484.9 36.2L486.1 40Z" fill="#6e6e6e"/>
<!-- flip -->
<g stroke="#747474" stroke-width="1" fill="none">
<path d="M462.3 59.4V67.4L466.6 63.4Z"/><path d="M469 57V70"/>
<path d="M486 57.2H495.4L490.7 61.4Z"/><path d="M484 63.4H497.4"/>
</g>
<path d="M476.2 59V67.8L471.4 63.4Z" fill="#8a8a8a"/><path d="M485.6 70H495.8L490.7 65.4Z" fill="#8a8a8a"/>
<!-- P brackets -->
<path d="M506.2 45.5V42.8H509M524 42.8H526.8V45.5M526.8 59.5V62.2H524M509 62.2H506.2V59.5" fill="none" stroke="#757575" stroke-width="1"/>
<!-- select container icons -->
<g fill="#7c7c7c">
<path d="M546.3 36L549 38.6H543.6Z"/><rect x="545.1" y="39.6" width="2.4" height="2.4"/><path d="M545.9 42h.8v2h3.6v1.6h2v2.6h-2.8v-2.6h-.1v-.8h-2.7v.8h0v2.6h-2.8v-2.6h2v-.8h-2.8v.8h.1v2.6h-2.8v-2.6h2v-1.6h3.5z"/>
<path d="M546.3 70.2L549 67.6H543.6Z"/><rect x="545.1" y="57.2" width="2.4" height="2.4"/><path d="M545.9 59.6h.8v2h3.6v1.6h1.4v2.6h-2.8v-2.6h.6v-.8h-2.8v.8h.6v2.6h-2.8v-2.6h.6v-.8h-2.8v.8h.6v2.6h-2.8v-2.6h1.4v-1.6h3.6z"/>
</g>
<g fill="#b6b6b6">
<path d="M561 42.4L563.8 39.6V45.2Z"/><rect x="569" y="38" width="2.6" height="2.6"/><path d="M569.9 40.6h.8v1.8h3.8v1.6h1.4v2.8h-2.8v-2.8h.6v-.8h-3v.8h.6v2.8h-2.8v-2.8h.6v-.8h-3v.8h.6v2.8h-2.8v-2.8h1.4v-1.6h3.8z"/>
<path d="M576 63.6L573.2 60.8V66.4Z"/><rect x="565.8" y="59.3" width="2.6" height="2.6"/><path d="M566.7 61.9h.8v1.6h3.2v1.6h1v3h-2.8v-3h1v-.8h-2.4v.8h1v3h-2.8v-3h1v-.8h-2.4v.8h1v3h-2.8v-3h1v-1.6h3.2z"/>
</g>
<!-- none swatch -->
<rect x="592" y="60.4" width="7" height="7.2" fill="#4a4a4a"/>
<path d="M588.6 70.4L602.2 57.4" stroke="#d01a24" stroke-width="1.8"/>
<!-- dotted square icon -->
<rect x="711.9" y="38.1" width="7.6" height="7.6" fill="none" stroke="#d0d0d0" stroke-width="1.1" stroke-dasharray="2.2 1.4"/>
<rect x="721.4" y="45.2" width="1.2" height="1.2" fill="#d0d0d0"/>
<!-- drop shadow icon -->
<rect x="735.4" y="38.1" width="8.8" height="7.8" fill="none" stroke="#b4b4b4" stroke-width="1.1"/>
<rect x="735" y="46.2" width="9.6" height="1.6" fill="#8a8a8a" opacity=".8"/>
<!-- checker -->
<g fill="#c8c8c8"><rect x="709.2" y="59" width="9.4" height="9" fill="none" stroke="#c8c8c8" stroke-width=".9"/>
<rect x="711" y="60.6" width="2.2" height="2.2"/><rect x="714.8" y="60.6" width="2.2" height="2.2"/><rect x="712.9" y="62.5" width="2" height="2"/><rect x="711" y="64.4" width="2.2" height="2.2"/><rect x="714.8" y="64.4" width="2.2" height="2.2"/></g>
<!-- text wrap icons -->
<g stroke="#d8d8d8" stroke-width="1" fill="none">
<path d="M793.5 37.2H804.7M793.5 39.4H804.7M793.5 41.6H804.7M793.5 43.8H804.7M793.5 46H804.7"/>
</g>
<rect x="796.4" y="39.8" width="5.4" height="3.6" fill="#9a9a9a"/>
<g stroke="#bdbdbd" stroke-width="1" fill="none">
<path d="M815 36.6H826.3M815 46.4H826.3M815 39H817.6M815 41.4H817.6M815 43.8H817.6M823.6 39H826.3M823.6 41.4H826.3M823.6 43.8H826.3"/>
<rect x="818.7" y="38.6" width="3.8" height="5.8"/>
<path d="M793.3 58.4H804.7M793.3 68.2H804.7M793.3 60.8H795.6M793.3 63.2H794.8M793.3 65.6H795.6M802.4 60.8H804.7M803.2 63.2H804.7M802.4 65.6H804.7"/>
<path d="M815 58.4H826.3M815 66H826.3M815 68.2H826.3"/>
</g>
<circle cx="799" cy="63.3" r="3.2" fill="#c4c4c4"/>
<rect x="818.2" y="60.6" width="4.8" height="3.2" fill="#bdbdbd"/>
<!-- corner icon -->
<path d="M842 39.2H849.8V46.6H842Z" fill="none" stroke="#8c8c78" stroke-width="1"/>
<g fill="#2f80e6"><rect x="840" y="37.2" width="3.6" height="3.6" rx=".6"/><rect x="848.2" y="37.2" width="3.6" height="3.6" rx=".6"/><rect x="840" y="45" width="3.6" height="3.6" rx=".6"/><rect x="848.2" y="45" width="3.6" height="3.6" rx=".6"/></g>
<path d="M858 58.2H903.8V69.4" fill="none" stroke="#2c2c2c" stroke-width="1.2"/>
<!-- lightning -->
<path d="M991.6 46L986 53.4H989.4L987.8 58.4L993.8 50.6H990.2Z" fill="#cfcfcf"/>
<!-- gear -->
<g transform="translate(1014.2 42.3)"><circle r="2.7" fill="none" stroke="#d2d2d2" stroke-width="1.7"/><g stroke="#d2d2d2" stroke-width="1.5"><path d="M0 -4.4V-3M0 4.4V3M-4.4 0H-3M4.4 0H3M-3.1 -3.1L-2.1 -2.1M3.1 3.1L2.1 2.1M-3.1 3.1L-2.1 2.1M3.1 -3.1L2.1 -2.1"/></g></g>
<path d="M1009 60.6H1019M1009 63.3H1019M1009 66H1019" stroke="#cfcfcf" stroke-width="1.1"/>

<!-- toolbar head -->
<path d="M1 79.8L2.8 81.5L1 83.2M4 79.8L5.8 81.5L4 83.2" fill="none" stroke="#9a9a9a" stroke-width=".9"/>
<path d="M3.5 91H19" stroke="#383838" stroke-width="2.4" stroke-dasharray="1.2 1"/>
<!-- selected tool bg -->
<rect x="1.2" y="99.3" width="21" height="16.8" rx="1" fill="#313131"/>
<g id="tri"><path d="M0 0L-3.2 0L0 -3.2Z" fill="#c4c4c4"/></g>
<!-- selection tool -->
<path d="M7.6 101.6V114.2L10.9 110.6H16.2Z" fill="none" stroke="#d4d4d4" stroke-width="1.2" stroke-linejoin="round"/>
<!-- direct selection -->
<path d="M7.3 121V134.4L10.8 129.4H16.8Z" fill="#cacaca"/>
<!-- page tool -->
<path d="M6.6 140.9H12.6L15.6 143.9V147.2M12.4 150.9H6.6V140.9" fill="none" stroke="#cccccc" stroke-width="1.1" stroke-linejoin="round"/>
<path d="M12.4 141V144.2H15.6" fill="none" stroke="#cccccc" stroke-width="1"/>
<path d="M13.4 146.4V153.4L15.2 151.4H18.6Z" fill="#d4d4d4" stroke="#4a4a4a" stroke-width=".6"/>
<!-- gap tool -->
<path d="M4.4 160V171.2M18.2 160V171.2" stroke="#d0d0d0" stroke-width="1.5"/>
<path d="M7.5 165.6H15" stroke="#d0d0d0" stroke-width="1.1"/>
<path d="M6 165.6L9 163.2V168ZM16.6 165.6L13.6 163.2V168Z" fill="#d0d0d0"/>
<!-- content collector -->
<path d="M6 183.4V190.8H17V183.4" fill="none" stroke="#cccccc" stroke-width="1.3"/>
<path d="M8 187.6H15M8 185.2H9.4M11 185.2H12.4M13.8 185.2H15" stroke="#cccccc" stroke-width="1"/>
<path d="M8 178.6L12 182.4" stroke="#cccccc" stroke-width="1.2"/>
<path d="M13.2 180.2V183.6H9.8Z" fill="#cccccc"/>
<use href="#tri" x="21.2" y="191.8"/>
<!-- type tool -->
<path d="M5.8 201H17.2V204.2H16.2Q16 202.4 14.4 202.4H12.7V210.2Q12.7 211.2 14.4 211.3V212.2H8.6V211.3Q10.3 211.2 10.3 210.2V202.4H8.6Q7 202.4 6.8 204.2H5.8Z" fill="#d0d0d0"/>
<use href="#tri" x="21.2" y="212.8"/>
<!-- line tool -->
<path d="M5.6 230.8L16.8 220" stroke="#d0d0d0" stroke-width="1.3"/>
<!-- pen tool -->
<path d="M5.2 251.2L7.2 244.4L12.2 241.6L16 245.4L13 250.2Z" fill="#c8c8c8"/>
<path d="M13 240.6L14.8 238.8L18 242L16.2 243.8Z" fill="#c8c8c8"/>
<path d="M5.6 250.8L10 246.6" stroke="#464646" stroke-width=".9"/><circle cx="10.4" cy="246.2" r="1" fill="#464646"/>
<use href="#tri" x="21.2" y="251.8"/>
<!-- pencil -->
<path d="M5.2 270L6.4 265.8L13.6 258.6L16.8 261.8L9.6 269Z" fill="#c8c8c8"/>
<path d="M14.4 257.8L15.4 256.8Q16 256.4 16.6 257L18.2 258.6Q18.8 259.2 18.2 259.8L17.4 260.8Z" fill="#c8c8c8"/>
<path d="M5.2 270L6 267.4L7.8 269.2Z" fill="#464646"/>
<use href="#tri" x="21.2" y="270.6"/>
<!-- rect frame -->
<path d="M5.6 278H17.2V288.6H5.6ZM5.6 278L17.2 288.6M17.2 278L5.6 288.6" fill="none" stroke="#cccccc" stroke-width="1.1"/>
<use href="#tri" x="21.2" y="290.4"/>
<!-- rect -->
<rect x="5.6" y="297.2" width="11.6" height="10" fill="#5e5e5e" stroke="#c4c4c4" stroke-width="1.1"/>
<use href="#tri" x="21.2" y="309.6"/>
<!-- scissors -->
<g fill="none" stroke="#cccccc" stroke-width="1.2"><circle cx="16.2" cy="319.8" r="1.9"/><circle cx="16.2" cy="327.8" r="1.9"/><path d="M14.6 321L5.4 328.6M14.6 326.6L5.4 319"/></g>
<!-- free transform -->
<path d="M4.2 337V347L7.4 344H11.2Z" fill="#c8c8c8"/>
<path d="M9 338.6H18.4V348.4H9V345.5" fill="none" stroke="#c8c8c8" stroke-width="1.1" stroke-dasharray="1.6 1.1"/>
<use href="#tri" x="21.2" y="350.6"/>
<!-- gradient swatch -->
<defs><linearGradient id="gsw" x1="0" y1="0" x2="1" y2="0"><stop offset="0" stop-color="#484848"/><stop offset="1" stop-color="#b8b8b8"/></linearGradient>
<linearGradient id="gfe" x1="0" y1="0" x2="0" y2="1"><stop offset="0" stop-color="#5a5a5a"/><stop offset=".45" stop-color="#888"/><stop offset="1" stop-color="#b0b0b0"/></linearGradient></defs>
<rect x="5.5" y="357.5" width="12" height="10" fill="url(#gsw)" stroke="#bababa" stroke-width="1"/>
<rect x="5.5" y="376.5" width="12" height="10" fill="url(#gfe)" stroke="#b4b4b4" stroke-width="1"/>
<path d="M6 381Q7.5 378 9 381Q10.5 378 12 381Q13.5 378 15 381Q16 379 17 381" fill="none" stroke="#5a5a5a" stroke-width="1"/>
<!-- note -->
<path d="M5.8 398H17.2V405.6L14.2 408.6H5.8Z" fill="#b8b8b8"/>
<path d="M7.6 400.4H15.4M7.6 402.6H15.4M7.6 404.8H12.4" stroke="#4a4a4a" stroke-width=".9"/>
<path d="M13.6 408V405.2H16.6" fill="none" stroke="#4a4a4a" stroke-width=".8"/>
<!-- eyedropper -->
<path d="M5 429L5.4 426L12 419.4L14 421.4L7.6 428Z" fill="none" stroke="#c4c4c4" stroke-width="1.1" stroke-linejoin="round"/>
<path d="M11.4 418L15.6 422.2M13 419.2L15.4 416.8Q16.6 416 17.6 417Q18.4 418 17.6 419L15 421.6" fill="#c4c4c4" stroke="#c4c4c4" stroke-width="1.2" stroke-linecap="round"/>
<path d="M10.6 426.2H17.8V428.6H10.6Z" fill="none" stroke="#b0b0b0" stroke-width=".8"/><path d="M13 426.2V428.6M15.4 426.2V428.6" stroke="#b0b0b0" stroke-width=".7"/>
<use href="#tri" x="22" y="430.2"/>
<!-- hand -->
<path d="M8.2 447.4Q6 443.8 4.8 441.6Q5.4 440.4 6.8 441.4L8.4 443.2L7.6 437.6Q8.6 436.4 9.4 437.6L10.4 441.4L10.6 436Q11.6 434.8 12.4 436L12.6 441.4L13.8 436.8Q14.8 436 15.4 437.2L14.8 442.2L16.4 439.4Q17.4 438.8 17.8 440L16.2 445Q15.6 447 14.6 447.6Z" fill="#b4b4b4"/>
<!-- zoom -->
<circle cx="9.9" cy="459.3" r="4.5" fill="none" stroke="#c0c0c0" stroke-width="1.2"/><path d="M13.2 462.6L17.4 466.9" stroke="#c0c0c0" stroke-width="1.6" stroke-linecap="round"/>
<!-- default fill/stroke -->
<rect x="3.2" y="477.8" width="5" height="5" fill="#2a2a2a" stroke="#a8a8a8" stroke-width=".7"/>
<rect x=".6" y="475" width="5" height="5" fill="#d8d8d8"/><path d="M.8 479.8L5.4 475.2" stroke="#d02030" stroke-width="1"/>
<path d="M5.6 481.6L6.4 480.4L7.2 481.6" fill="none" stroke="#ddd" stroke-width=".6"/>
<!-- swap -->
<path d="M16 478.2H18.4Q20.4 478.2 20.4 480.2V483" fill="none" stroke="#c4c4c4" stroke-width="1.1"/>
<path d="M14.4 478.2L16.8 476.2V480.2ZM20.4 484.8L18.4 482.4H22.4Z" fill="#c4c4c4"/>
<!-- stroke & fill -->
<rect x="7" y="496" width="16" height="16" fill="#fbfbfb"/>
<rect x="12.8" y="501.4" width="6.2" height="5.8" fill="#4c4c4c"/>
<path d="M8.4 510.2L22.2 497.4" stroke="#d0101c" stroke-width="1.7"/>
<rect x="0" y="488.3" width="15.3" height="16" fill="#fdfdfd" stroke="#4a4a4a" stroke-width=".5"/>
<!-- format buttons -->
<rect x="1.5" y="518" width="9.2" height="8.8" rx="1" fill="#2c2c2c"/>
<rect x="3.8" y="520" width="4.6" height="4.8" fill="none" stroke="#b4b4b4" stroke-width=".9"/>
<path d="M15.3 519.6H21.8V521.6H21.2Q21 520.6 20.2 520.6H19.5V524.8Q19.5 525.3 20.4 525.4V526H16.7V525.4Q17.6 525.3 17.6 524.8V520.6H16.9Q16.1 520.6 15.9 521.6H15.3Z" fill="#b8b8b8"/>
<!-- view mode -->
<rect x=".8" y="533.4" width="21" height="17" rx="1" fill="#2a2a2a"/>
<rect x="5" y="536.4" width="12.2" height="10.2" fill="#f2f2f2" stroke="#fff" stroke-width=".8"/>
<use href="#tri" x="21.6" y="549"/>
<!-- tab close -->
<path d="M41.2 86.6L45.4 90.8M45.4 86.6L41.2 90.8" stroke="#e8e8e8" stroke-width="1.1"/>

<!-- pages panel header -->
<path d="M731.7 98.2L733.7 96.2L735.7 98.2M731.7 100.4L733.7 102.4L735.7 100.4" fill="none" stroke="#bcbcbc" stroke-width=".9"/>
<path d="M859.2 96.4L862 99.2L859.2 102M863.6 96.4L866.4 99.2L863.6 102" fill="none" stroke="#d0d0d0" stroke-width="1.2"/>
<path d="M878.7 96.7H887M878.7 98.9H887M878.7 101.1H887" stroke="#c4c4c4" stroke-width="1.3"/>
<!-- page marker triangle -->
<path d="M814 164.2H821L817.5 167.8Z" fill="#c8c8c8"/>
<!-- photo thumbnail -->
<defs><filter id="tb" x="-50%" y="-50%" width="200%" height="200%"><feGaussianBlur stdDeviation=".7"/></filter>
<linearGradient id="nv" x1="0" y1="0" x2="1" y2="1"><stop offset="0" stop-color="#14366a"/><stop offset="1" stop-color="#1c4888"/></linearGradient></defs>
<rect x="804" y="220.2" width="28.5" height="27.8" fill="url(#nv)"/>
<g fill="#86aee2" filter="url(#tb)">
<path d="M818.6 238.4L821.4 231.4L824.6 226.6" stroke="#8db0e4" stroke-width="2.4" fill="none" stroke-linecap="round"/>
<ellipse cx="823.4" cy="228.8" rx="1.3" ry="3.2" transform="rotate(35 823.4 228.8)" fill="#a8c4ec"/>
<ellipse cx="819" cy="237.4" rx="1.8" ry="3" transform="rotate(20 819 237.4)" fill="#a0bce8"/>
<circle cx="806.9" cy="235" r="1.3"/><circle cx="811.1" cy="233.4" r="1.2"/><circle cx="814.4" cy="235" r="1"/><circle cx="816" cy="231.5" r=".9"/>
<circle cx="807.2" cy="239.2" r="1.4"/><circle cx="809.8" cy="240" r="1"/><circle cx="814.7" cy="244.5" r="1.2"/>
</g>
<rect x="825.8" y="220.2" width="6.7" height="8.6" fill="#f4f6fa"/>
<rect x="774.8" y="220.6" width="6.8" height="8.4" fill="#f4f8ff"/>
<!-- cursor -->
<path d="M787.3 245.4V257.6L790.2 255L792.2 259.6L794.4 258.6L792.4 254.2H796.2Z" fill="#111" stroke="#fff" stroke-width=".9" stroke-linejoin="round"/>
<!-- footer icons -->
<g fill="none" stroke="#c0c0c0" stroke-width="1">
<path d="M816.7 489.6H822.4V494.3H816.7Z"/><path d="M820.2 489.4V486.6H825.4L827.8 489V494.3H822.6"/><path d="M822 487.4L826.8 492.4"/>
</g>
<rect x="829.4" y="493.6" width="1.1" height="1.1" fill="#c0c0c0"/>
<path d="M841.8 486.2H850.2V494.4H845.4V490.4H841.8Z" fill="#c6c6c6"/><path d="M842.2 491.2H844.6V493.8Z" fill="#c6c6c6"/>
<g fill="none" stroke="#b4b4b4" stroke-width="1"><path d="M864.4 487.8H871.4V494.4H864.4Z"/><path d="M863.4 487.4H872.4M866.4 487.2V485.8H869.4V487.2M866.6 489.4V493M869.2 489.4V493"/></g>

<!-- dock collapse -->
<path d="M1016.6 80L1014.8 81.8L1016.6 83.6M1020 80L1018.2 81.8L1020 83.6" fill="none" stroke="#a8a8a8" stroke-width=".9"/>
<!-- pages icon -->
<g fill="#c6c6c6">
<path d="M902.2 103.2L904.6 100.6H908.2V112.2H902.2Z"/><path d="M909.8 100.6H913.4L916 103.2V112.2H909.8Z"/>
</g>
<path d="M909 98.6V113.6" stroke="#c6c6c6" stroke-width=".8"/>
<path d="M902.4 103.4H904.8V100.8M915.8 103.4H913.2V100.8" fill="none" stroke="#6a6a6a" stroke-width=".7"/>
<!-- layers -->
<path d="M908.8 121.2L915.6 125.2L908.8 129.2L902 125.2Z" fill="#c8c8c8"/>
<path d="M902.4 129.2L908.8 133L915.2 129.2" fill="none" stroke="#c8c8c8" stroke-width="1.6"/>
<!-- swatches -->
<rect x="902.2" y="146.4" width="13" height="8.8" fill="#bcbcbc"/>
<g fill="#5a5a5a"><rect x="903.2" y="147.4" width="3.2" height="3"/><rect x="911" y="147.4" width="3.2" height="3" fill="#6e6e6e"/><rect x="907.1" y="151.2" width="3.2" height="3" fill="#808080"/><rect x="903.2" y="151.2" width="3.2" height="3" fill="#8a8a8a"/></g>
<!-- text wrap -->
<path d="M902.4 201H915.6M902.4 210.6H915.6M902.4 203.4H905.2M902.4 205.8H904.4M902.4 208.2H905.2M912.8 203.4H915.6M913.6 205.8H915.6M912.8 208.2H915.6" stroke="#c2c2c2" stroke-width="1"/>
<circle cx="909" cy="205.8" r="2.9" fill="#c8c8c8"/>
<!-- stroke -->
<path d="M902 234.2H916" stroke="#c4c4c4" stroke-width="1"/><path d="M902 238H916" stroke="#c4c4c4" stroke-width="1.6"/><path d="M902 242.2H916" stroke="#c4c4c4" stroke-width="2.2"/>
<!-- gradient -->
<defs><linearGradient id="dgr" x1="0" y1="0" x2="1" y2="0"><stop offset="0" stop-color="#4c4c4c"/><stop offset="1" stop-color="#c4c4c4"/></linearGradient></defs>
<rect x="902.5" y="256.5" width="13" height="9" fill="url(#dgr)" stroke="#bcbcbc" stroke-width="1"/>
<!-- story -->
<rect x="903" y="288" width="12" height="12.4" fill="#c6c6c6"/>
<path d="M905 290.4H909M907 290.4V293.6" stroke="#4a4a4a" stroke-width="1"/><path d="M910 292.4H913M905 295.4H913M905 297.6H913" stroke="#4a4a4a" stroke-width=".9"/>
<!-- hyperlinks -->
<circle cx="907.6" cy="314.6" r="5.2" fill="#c4c4c4"/>
<path d="M904.6 311.4Q906 313.4 908 312.6Q909.4 311.4 908.4 310.2M903.6 316.6Q905.6 315.6 906.6 317.6Q906.4 319.4 905 319.2" fill="none" stroke="#484848" stroke-width="1.1"/>
<path d="M909.8 315.2L910.8 320.6Q911.2 323.6 913.6 323.8Q916.6 323.6 916.4 320.6L916 317.6L912.4 316.8L911.6 314.6Q910.4 313.8 909.8 315.2Z" fill="#dcdcdc" stroke="#484848" stroke-width=".7"/>
<!-- paragraph -->
<path d="M910.2 366.6V378M912.8 366.6V378" stroke="#c4c4c4" stroke-width="1.1"/><path d="M910.4 366.2H907.6A3.4 3.4 0 0 0 907.6 373H910.4Z" fill="#c4c4c4"/><path d="M909.6 366.7H913.8" stroke="#c4c4c4" stroke-width="1"/>
<!-- paragraph styles -->
<path d="M911.8 387.6V397.8M914.2 387.6V397.8" stroke="#c4c4c4" stroke-width="1"/><path d="M912 387.2H909.6A2.9 2.9 0 0 0 909.6 393H912Z" fill="#c4c4c4"/><path d="M911.4 387.7H915.2" stroke="#c4c4c4" stroke-width="1"/>
<g fill="#464646" stroke="#c0c0c0" stroke-width=".9"><rect x="902.4" y="393.6" width="4.6" height="4.6"/><rect x="904.6" y="396" width="4.6" height="4.6"/></g>
<!-- character styles squares -->
<g fill="#464646" stroke="#c0c0c0" stroke-width=".9"><rect x="902.4" y="448.6" width="4.6" height="4.6"/><rect x="904.6" y="451" width="4.6" height="4.6"/></g>
<path d="M914.8 421.6V433.4" stroke="#c0c0c0" stroke-width="1"/>

</svg>

<svg class="a" style="left:0;top:0" width="1024" height="550" viewBox="0 0 1024 550" font-family="Liberation Sans, sans-serif" text-rendering="geometricPrecision" id="txt">
<defs><clipPath id="c1"><rect x="780" y="90" width="28.6" height="18"/></clipPath><clipPath id="c2"><rect x="812" y="90" width="29" height="18"/></clipPath><clipPath id="rc"><rect x="41" y="100" width="683.3" height="13"/></clipPath></defs>
<g clip-path="url(#rc)"><text transform="translate(45.15 109.00) scale(1.000 1)" font-size="8.4" fill="#e6e6e6" stroke="#e6e6e6" stroke-width=".2">250</text>
<text transform="translate(89.90 109.00) scale(1.000 1)" font-size="8.4" fill="#e6e6e6" stroke="#e6e6e6" stroke-width=".2">200</text>
<text transform="translate(134.65 109.00) scale(1.000 1)" font-size="8.4" fill="#e6e6e6" stroke="#e6e6e6" stroke-width=".2">150</text>
<text transform="translate(179.40 109.00) scale(1.000 1)" font-size="8.4" fill="#e6e6e6" stroke="#e6e6e6" stroke-width=".2">100</text>
<text transform="translate(224.15 109.00) scale(1.000 1)" font-size="8.4" fill="#e6e6e6" stroke="#e6e6e6" stroke-width=".2">50</text>
<text transform="translate(268.90 109.00) scale(1.000 1)" font-size="8.4" fill="#e6e6e6" stroke="#e6e6e6" stroke-width=".2">0</text>
<text transform="translate(313.65 109.00) scale(1.000 1)" font-size="8.4" fill="#e6e6e6" stroke="#e6e6e6" stroke-width=".2">50</text>
<text transform="translate(358.40 109.00) scale(1.000 1)" font-size="8.4" fill="#e6e6e6" stroke="#e6e6e6" stroke-width=".2">100</text>
<text transform="translate(403.15 109.00) scale(1.000 1)" font-size="8.4" fill="#e6e6e6" stroke="#e6e6e6" stroke-width=".2">150</text>
<text transform="translate(447.90 109.00) scale(1.000 1)" font-size="8.4" fill="#e6e6e6" stroke="#e6e6e6" stroke-width=".2">200</text>
<text transform="translate(492.65 109.00) scale(1.000 1)" font-size="8.4" fill="#e6e6e6" stroke="#e6e6e6" stroke-width=".2">250</text>
<text transform="translate(537.40 109.00) scale(1.000 1)" font-size="8.4" fill="#e6e6e6" stroke="#e6e6e6" stroke-width=".2">300</text>
<text transform="translate(582.15 109.00) scale(1.000 1)" font-size="8.4" fill="#e6e6e6" stroke="#e6e6e6" stroke-width=".2">350</text>
<text transform="translate(626.90 109.00) scale(1.000 1)" font-size="8.4" fill="#e6e6e6" stroke="#e6e6e6" stroke-width=".2">400</text>
<text transform="translate(671.65 109.00) scale(1.000 1)" font-size="8.4" fill="#e6e6e6" stroke="#e6e6e6" stroke-width=".2">450</text>
<text transform="translate(716.40 109.00) scale(1.000 1)" font-size="8.4" fill="#e6e6e6" stroke="#e6e6e6" stroke-width=".2">500</text></g>
<text transform="translate(63.30 17.90) scale(0.911 1)" font-size="9.2" fill="#4c4c4c" font-weight="bold">Br</text>
<text transform="translate(92.50 17.90) scale(0.967 1)" font-size="9.2" fill="#4c4c4c" font-weight="bold">St</text>
<text transform="translate(116.60 19.00) scale(0.892 1)" font-size="10.2" fill="#f4f4f4" font-weight="bold">25%</text>
<text transform="translate(456.40 18.10) scale(1.013 1)" font-size="10.2" fill="#e0e0e0" stroke="#e0e0e0" stroke-width=".25">Adobe InDesign CC 2018</text>
<text transform="translate(728.90 18.70) scale(0.907 1)" font-size="10.5" fill="#f4f4f4" font-weight="bold">Publish Online</text>
<text transform="translate(819.50 18.10) scale(1.003 1)" font-size="10.2" fill="#f4f4f4" font-weight="bold">Typography</text>
<text transform="translate(930.50 17.50) scale(0.934 1)" font-size="9.0" fill="#7c7c7c">Adobe Stock</text>
<text transform="translate(47.60 46.10) scale(0.892 1)" font-size="8.3" fill="#f4f4f4" font-weight="bold">X:</text>
<text transform="translate(47.60 66.70) scale(0.912 1)" font-size="8.3" fill="#f4f4f4" font-weight="bold">Y:</text>
<text transform="translate(138.00 46.10) scale(0.889 1)" font-size="8.3" fill="#f4f4f4" font-weight="bold">W:</text>
<text transform="translate(138.30 66.70) scale(0.925 1)" font-size="8.3" fill="#f4f4f4" font-weight="bold">H:</text>
<text transform="translate(75.40 45.80) scale(1.073 1)" font-size="8.3" fill="#7e7e7e">424.9 mm</text>
<text transform="translate(76.90 66.40) scale(1.086 1)" font-size="8.3" fill="#7e7e7e">-12.45 mm</text>
<text transform="translate(645.50 45.80) scale(1.080 1)" font-size="8.3" fill="#ececec" stroke="#ececec" stroke-width=".2">0 mm</text>
<text transform="translate(728.00 66.40) scale(0.922 1)" font-size="8.3" fill="#ececec" stroke="#ececec" stroke-width=".2">100%</text>
<text transform="translate(873.20 45.80) scale(1.079 1)" font-size="8.3" fill="#ececec" stroke="#ececec" stroke-width=".2">4.233 mm</text>
<text transform="translate(53.75 92.20) scale(0.893 1)" font-size="9.5" fill="#f0f0f0" font-weight="bold">*design 1.indd @ 25% [GPU Preview]</text>
<text transform="translate(740.20 102.80) scale(0.859 1)" font-size="10.2" fill="#f4f4f4" font-weight="bold">Pages</text>
<g clip-path="url(#c1)"><text transform="translate(785.00 102.80) scale(0.830 1)" font-size="10.2" fill="#cdcdcd" font-weight="bold">Layers</text></g>
<g clip-path="url(#c2)"><text transform="translate(817.20 102.80) scale(0.936 1)" font-size="10.2" fill="#cdcdcd" font-weight="bold">Swatches</text></g>
<text transform="translate(728.40 123.60) scale(0.949 1)" font-size="8.8" fill="#e2e2e2">[None]</text>
<text transform="translate(728.40 146.90) scale(0.998 1)" font-size="8.8" fill="#e2e2e2">A-Master</text>
<text transform="translate(730.30 494.20) scale(0.986 1)" font-size="8.6" fill="#e4e4e4">10 Pages in 6 Spre...</text>
<text transform="translate(923.30 109.50) scale(0.856 1)" font-size="10.2" fill="#f2f2f2" font-weight="bold">Pages</text>
<text transform="translate(923.30 132.10) scale(0.863 1)" font-size="10.2" fill="#f2f2f2" font-weight="bold">Layers</text>
<text transform="translate(923.30 154.60) scale(0.865 1)" font-size="10.2" fill="#f2f2f2" font-weight="bold">Swatches</text>
<text transform="translate(923.30 187.90) scale(0.859 1)" font-size="10.2" fill="#f2f2f2" font-weight="bold">Glyphs</text>
<text transform="translate(923.30 210.20) scale(0.933 1)" font-size="10.2" fill="#f2f2f2" font-weight="bold">Text Wrap</text>
<text transform="translate(923.30 242.60) scale(0.892 1)" font-size="10.2" fill="#f2f2f2" font-weight="bold">Stroke</text>
<text transform="translate(923.30 265.00) scale(0.914 1)" font-size="10.2" fill="#f2f2f2" font-weight="bold">Gradient</text>
<text transform="translate(923.30 298.00) scale(0.871 1)" font-size="10.2" fill="#f2f2f2" font-weight="bold">Story</text>
<text transform="translate(923.30 320.20) scale(0.926 1)" font-size="10.2" fill="#f2f2f2" font-weight="bold">Hyperlinks</text>
<text transform="translate(923.30 342.60) scale(0.861 1)" font-size="10.2" fill="#f2f2f2" font-weight="bold">Effects</text>
<text transform="translate(923.30 375.50) scale(0.906 1)" font-size="10.2" fill="#f2f2f2" font-weight="bold">Paragraph</text>
<text transform="translate(923.30 398.00) scale(0.901 1)" font-size="10.2" fill="#f2f2f2" font-weight="bold">Paragraph Styles</text>
<text transform="translate(923.30 431.00) scale(0.907 1)" font-size="10.2" fill="#f2f2f2" font-weight="bold">Character</text>
<text transform="translate(923.30 453.20) scale(0.903 1)" font-size="10.2" fill="#f2f2f2" font-weight="bold">Character Styles</text>
<text transform="translate(30.90 121.75) scale(0.930 1)" font-size="8.8" fill="#dcdcdc" stroke="#e6e6e6" stroke-width=".2">0</text>
<text transform="translate(30.90 151.10) scale(0.930 1)" font-size="8.8" fill="#dcdcdc" stroke="#e6e6e6" stroke-width=".2">1</text>
<text transform="translate(30.90 158.40) scale(0.930 1)" font-size="8.8" fill="#dcdcdc" stroke="#e6e6e6" stroke-width=".2">5</text>
<text transform="translate(30.90 165.70) scale(0.930 1)" font-size="8.8" fill="#dcdcdc" stroke="#e6e6e6" stroke-width=".2">0</text>
<text transform="translate(30.90 195.85) scale(0.930 1)" font-size="8.8" fill="#dcdcdc" stroke="#e6e6e6" stroke-width=".2">2</text>
<text transform="translate(30.90 203.15) scale(0.930 1)" font-size="8.8" fill="#dcdcdc" stroke="#e6e6e6" stroke-width=".2">0</text>
<text transform="translate(30.90 210.45) scale(0.930 1)" font-size="8.8" fill="#dcdcdc" stroke="#e6e6e6" stroke-width=".2">0</text>
<text transform="translate(30.90 272.85) scale(0.930 1)" font-size="8.8" fill="#dcdcdc" stroke="#e6e6e6" stroke-width=".2">0</text>
<text transform="translate(30.90 317.60) scale(0.930 1)" font-size="8.8" fill="#dcdcdc" stroke="#e6e6e6" stroke-width=".2">5</text>
<text transform="translate(30.90 324.90) scale(0.930 1)" font-size="8.8" fill="#dcdcdc" stroke="#e6e6e6" stroke-width=".2">0</text>
<text transform="translate(30.90 362.35) scale(0.930 1)" font-size="8.8" fill="#dcdcdc" stroke="#e6e6e6" stroke-width=".2">1</text>
<text transform="translate(30.90 369.65) scale(0.930 1)" font-size="8.8" fill="#dcdcdc" stroke="#e6e6e6" stroke-width=".2">0</text>
<text transform="translate(30.90 376.95) scale(0.930 1)" font-size="8.8" fill="#dcdcdc" stroke="#e6e6e6" stroke-width=".2">0</text>
<text transform="translate(30.90 407.10) scale(0.930 1)" font-size="8.8" fill="#dcdcdc" stroke="#e6e6e6" stroke-width=".2">1</text>
<text transform="translate(30.90 414.40) scale(0.930 1)" font-size="8.8" fill="#dcdcdc" stroke="#e6e6e6" stroke-width=".2">5</text>
<text transform="translate(30.90 421.70) scale(0.930 1)" font-size="8.8" fill="#dcdcdc" stroke="#e6e6e6" stroke-width=".2">0</text>
<text transform="translate(30.90 451.85) scale(0.930 1)" font-size="8.8" fill="#dcdcdc" stroke="#e6e6e6" stroke-width=".2">2</text>
<text transform="translate(30.90 459.15) scale(0.930 1)" font-size="8.8" fill="#dcdcdc" stroke="#e6e6e6" stroke-width=".2">0</text>
<text transform="translate(30.90 466.45) scale(0.930 1)" font-size="8.8" fill="#dcdcdc" stroke="#e6e6e6" stroke-width=".2">0</text>
<text transform="translate(30.90 528.45) scale(0.930 1)" font-size="8.8" fill="#dcdcdc" stroke="#e6e6e6" stroke-width=".2">0</text>
<text transform="translate(827.10 176.70) scale(1.000 1)" font-size="8" fill="#2a2a2a">A</text>
<text transform="translate(817.20 210.70) scale(1.000 1)" text-anchor="middle" font-size="8.4" fill="#dedede">1</text>
<text transform="translate(776.10 227.70) scale(1.000 1)" font-size="8" fill="#2a2a2a">A</text>
<text transform="translate(827.10 227.70) scale(1.000 1)" font-size="8" fill="#2a2a2a">A</text>
<text transform="translate(776.10 278.80) scale(1.000 1)" font-size="8" fill="#2a2a2a">A</text>
<text transform="translate(827.10 278.80) scale(1.000 1)" font-size="8" fill="#2a2a2a">A</text>
<text transform="translate(803.50 312.90) scale(1.000 1)" text-anchor="middle" font-size="8.4" fill="#dedede">4–5</text>
<text transform="translate(776.10 330.20) scale(1.000 1)" font-size="8" fill="#2a2a2a">A</text>
<text transform="translate(827.10 330.20) scale(1.000 1)" font-size="8" fill="#2a2a2a">A</text>
<text transform="translate(803.50 364.30) scale(1.000 1)" text-anchor="middle" font-size="8.4" fill="#dedede">6–7</text>
<text transform="translate(776.10 381.50) scale(1.000 1)" font-size="8" fill="#2a2a2a">A</text>
<text transform="translate(827.10 381.50) scale(1.000 1)" font-size="8" fill="#2a2a2a">A</text>
<text transform="translate(803.50 415.60) scale(1.000 1)" text-anchor="middle" font-size="8.4" fill="#dedede">8–9</text>
<text transform="translate(776.10 432.50) scale(1.000 1)" font-size="8" fill="#2a2a2a">A</text>
<text transform="translate(788.80 466.60) scale(1.000 1)" text-anchor="middle" font-size="8.4" fill="#dedede">10</text>
<text transform="translate(802.20 261.70) scale(1.000 1)" text-anchor="middle" font-size="8.4" fill="#fff" font-weight="bold">2–3</text>
<text transform="translate(901.60 189.40) scale(1.000 1)" font-size="15" fill="#c2c2c2" font-family="Liberation Serif, serif" font-style="italic">A</text>
<text transform="translate(903.00 343.60) scale(0.920 1)" font-size="13.5" fill="#c2c2c2" font-family="Liberation Serif, serif" font-style="italic">fx</text>
<text transform="translate(902.40 433.20) scale(1.000 1)" font-size="14.5" fill="#c6c6c6">A</text>
<text transform="translate(908.60 451.60) scale(1.000 1)" font-size="11.5" fill="#c6c6c6">A</text>
<text transform="translate(758.40 46.40) scale(0.950 1)" font-size="11.2" fill="#bcbcbc" font-family="Liberation Serif, serif" font-style="italic">fx.</text>
<text transform="translate(511.40 57.60) scale(1.000 1)" font-size="17.4" fill="#7a7a7a" font-family="Liberation Serif, serif">P</text>
</svg>
<div class="a" id="vig"></div>
<div class="a" id="botline"></div>
</div>
</body>
</html>
